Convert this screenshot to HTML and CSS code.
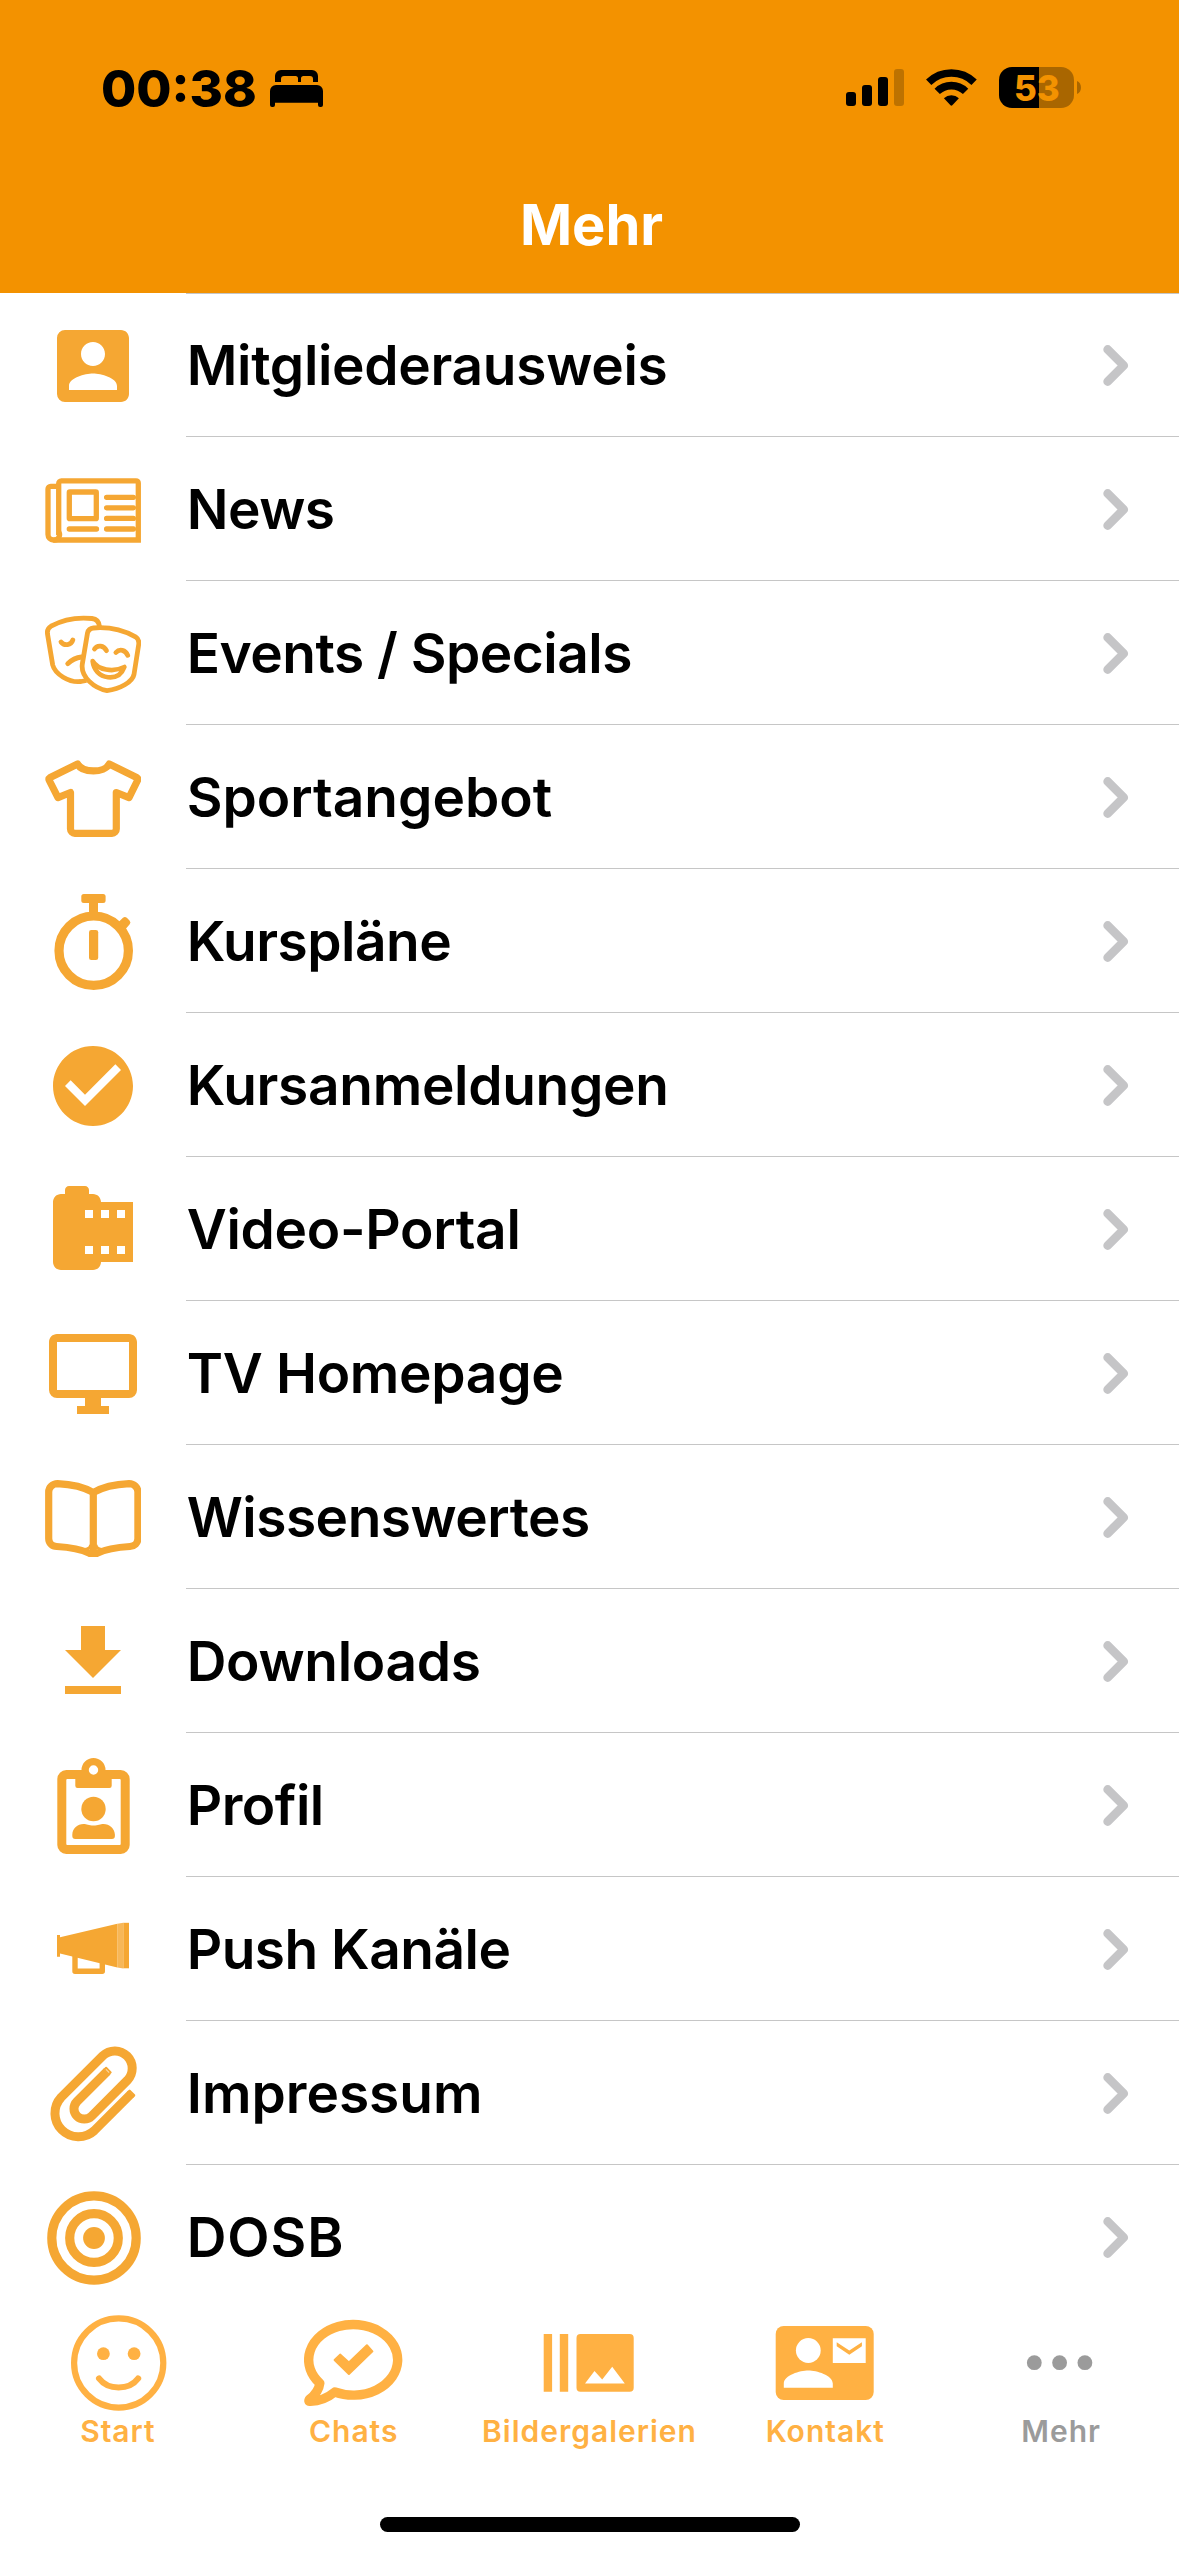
FILE: index.html
```html
<!DOCTYPE html>
<html lang="de">
<head>
<meta charset="utf-8">
<title>Mehr</title>
<link rel="stylesheet" href="styles.css">
</head>
<body>
<div class="screen">
  <header class="header">
    <div class="status">
      <span class="time">00:38</span>
      <svg class="bed" viewBox="270 69 54 39">
        <path d="M275 82V76a6 6 0 0 1 6-6h31a6 6 0 0 1 6 6v6h-5v-3a3 3 0 0 0-3-3h-6.500a2.500 2.500 0 0 0-2.500 2.500V82h-3v-3.500a2.500 2.500 0 0 0-2.500-2.500H284a3 3 0 0 0-3 3v3z"/>
        <path d="M270 105V91a6 6 0 0 1 6-6h41a6 6 0 0 1 6 6v14a2 2 0 0 1-2 2h-1a2 2 0 0 1-2-2v-2.300H275v2.300a2 2 0 0 1-2 2h-1a2 2 0 0 1-2-2z"/>
      </svg>
      <div class="indicators">
        <svg class="signal" viewBox="846 67 58 43">
          <rect x="846" y="92" width="10" height="14" rx="3"/>
          <rect x="862" y="85" width="10" height="21" rx="3"/>
          <rect x="878" y="77" width="10" height="29" rx="3"/>
          <rect x="894" y="69" width="10" height="37" rx="3" opacity=".22"/>
        </svg>
        <svg class="wifi" viewBox="925 67 53 43">
          <g fill="none" stroke="#000" stroke-width="7.600">
            <path d="M928.700 82.300A32.500 32.500 0 0 1 974.100 82.300"/>
            <path d="M937.200 91.400A20.300 20.300 0 0 1 965.600 91.400"/>
          </g>
          <path d="M943.900 98.300a11 11 0 0 1 15 0l-6.600 7a1.300 1.300 0 0 1-1.800 0z"/>
        </svg>
        <svg class="battery" viewBox="999 67 83 43">
          <path d="M1039 67h22a13 13 0 0 1 13 13v15a13 13 0 0 1-13 13h-22z" fill="#a96600"/>
          <path d="M1039 67h-27a13 13 0 0 0-13 13v15a13 13 0 0 0 13 13h27z"/>
          <path d="M1077 81c5.300 2 5.300 11 0 13z" fill="#a96600"/>
          <text class="level" x="1014" y="101">53</text>
        </svg>
      </div>
    </div>
    <h1 class="title">Mehr</h1>
  </header>

  <ul class="menu">
    <li class="item">
      <svg class="icon" viewBox="0 0 24 24"><path d="M3 5v14a2 2 0 0 0 2 2h14c1.100 0 2-.9 2-2V5c0-1.100-.9-2-2-2H5a2 2 0 0 0-2 2zm12 4c0 1.660-1.340 3-3 3s-3-1.340-3-3 1.340-3 3-3 3 1.340 3 3zm-9 8c0-2 4-3.100 6-3.100s6 1.100 6 3.100v1H6v-1z"/></svg>
      <div class="row"><span class="label">Mitgliederausweis</span><svg class="chevron" viewBox="0 0 26 43"><path d="M4.700 5.500 20.700 21.500 4.700 37.500"/></svg></div>
    </li>
    <li class="item">
      <svg class="icon line" viewBox="0 0 96 96" stroke-width="5.300">
        <path d="M13.700 73V21.500a2.700 2.700 0 0 1 2.700-2.700H91a2.300 2.300 0 0 1 2.300 2.300V78H8.400A5.400 5.400 0 0 1 3 72.600V27a2.700 2.700 0 0 1 2.700-2.700h8"/>
        <path d="M13.700 70a5.300 5.300 0 0 1-5.300 8"/>
        <rect x="24.300" y="30" width="27" height="26.700" rx=".5"/>
        <g stroke-linecap="round"><path d="M61.600 35.300h26.800M61.600 45.800h26.800M61.600 56.400h26.800M61.600 67h26.800M24.300 67h27.200"/></g>
      </svg>
      <div class="row"><span class="label tight">News</span><svg class="chevron" viewBox="0 0 26 43"><path d="M4.700 5.500 20.700 21.500 4.700 37.500"/></svg></div>
    </li>
    <li class="item">
      <svg class="icon line" viewBox="0 0 96 96" stroke-width="4.800" stroke-linejoin="round" stroke-linecap="round">
        <path stroke-linecap="butt" d="M54.500 20.500C54 16 51.500 13 47 12.500 32 11 18 13.500 6 20.200 3 22 2 24.500 2.500 28L7.700 59C10 68 24 77 36 75.500l5.500-1"/>
        <path d="M42.500 27c.8-3.200 2.600-4.700 6-5C63 20.800 78 24 90.500 30.800c2.800 1.700 3.700 4.200 3.200 7.700L89 68.500C87.500 76 75 83 62 84.600 49.500 82.500 35.500 71 37.300 58z"/>
        <path d="M16 36c3.200 4.300 10.200 3.300 11.800-2M22.700 57.700C26.500 54 31 51.600 36.500 51M49.500 43c3-4.400 9.200-3.600 12 1.700M70.900 46.500c3.600-4 9.600-2.600 11.800 2.800"/>
        <path d="M47.600 55c5.200 9 20.400 11.800 31.800 6C76.500 69 70.500 72 63 71.200 54.500 70.200 48.600 64 47.600 55z" stroke-width="4.600"/>
      </svg>
      <div class="row"><span class="label tight">Events / Specials</span><svg class="chevron" viewBox="0 0 26 43"><path d="M4.700 5.500 20.700 21.500 4.700 37.500"/></svg></div>
    </li>
    <li class="item">
      <svg class="icon line" viewBox="0 0 96 96" stroke-width="7.200" stroke-linejoin="round">
        <path d="M32.600 14 5.200 27.500Q3.400 28.700 4.300 30.500L13 47.600 25.500 42.500V79a4.300 4.300 0 0 0 4.300 4.300H67A4.300 4.300 0 0 0 71.300 79V42.500L84 47.600 92.500 30.500Q93.400 28.700 91.600 27.500L64.200 14C59.500 23.300 37.500 23.300 32.600 14z"/>
      </svg>
      <div class="row"><span class="label loose">Sportangebot</span><svg class="chevron" viewBox="0 0 26 43"><path d="M4.700 5.500 20.700 21.500 4.700 37.500"/></svg></div>
    </li>
    <li class="item">
      <svg class="icon" viewBox="0 0 96 96">
        <circle cx="48.700" cy="56.700" r="34.700" fill="none" stroke="#f5a733" stroke-width="9.200"/>
        <rect x="36.300" y="0" width="24.300" height="9" rx="2.500"/>
        <path d="M44 8h9v12h-9z"/>
        <rect x="44" y="36" width="9.200" height="30" rx="2.300"/>
        <path d="M72.500 29 78 23.700q2-1.600 3.800.1l2.700 2.700q1.800 2 .2 3.800L79.800 36z"/>
      </svg>
      <div class="row"><span class="label tight">Kurspläne</span><svg class="chevron" viewBox="0 0 26 43"><path d="M4.700 5.500 20.700 21.500 4.700 37.500"/></svg></div>
    </li>
    <li class="item">
      <svg class="icon" viewBox="0 0 24 24"><path d="M12 2C6.500 2 2 6.500 2 12s4.500 10 10 10 10-4.500 10-10S17.500 2 12 2m-2 15-5-5 1.410-1.410L10 14.170l7.590-7.590L19 8z"/></svg>
      <div class="row"><span class="label">Kursanmeldungen</span><svg class="chevron" viewBox="0 0 26 43"><path d="M4.700 5.500 20.700 21.500 4.700 37.500"/></svg></div>
    </li>
    <li class="item">
      <svg class="icon" viewBox="0 0 24 24"><path d="M14 5c0-1.100-.9-2-2-2h-1V2c0-.55-.45-1-1-1H6c-.55 0-1 .45-1 1v1H4c-1.100 0-2 .9-2 2v15c0 1.100.9 2 2 2h8c1.100 0 2-.9 2-2h8V5h-8zm-2 13h-2v-2h2v2zm0-9h-2V7h2v2zm4 9h-2v-2h2v2zm0-9h-2V7h2v2zm4 9h-2v-2h2v2zm0-9h-2V7h2v2z"/></svg>
      <div class="row"><span class="label">Video-Portal</span><svg class="chevron" viewBox="0 0 26 43"><path d="M4.700 5.500 20.700 21.500 4.700 37.500"/></svg></div>
    </li>
    <li class="item">
      <svg class="icon" viewBox="0 0 24 24"><path d="M21 16H3V4h18m0-2H3c-1.110 0-2 .89-2 2v12a2 2 0 0 0 2 2h7v2H8v2h8v-2h-2v-2h7a2 2 0 0 0 2-2V4c0-1.110-.9-2-2-2z"/></svg>
      <div class="row"><span class="label">TV Homepage</span><svg class="chevron" viewBox="0 0 26 43"><path d="M4.700 5.500 20.700 21.500 4.700 37.500"/></svg></div>
    </li>
    <li class="item">
      <svg class="icon line" viewBox="0 0 96 96" stroke-width="7.200">
        <path d="M48.300 22.500C38 16.500 26 14.200 12.500 13.600 7.500 13.600 3.700 17.500 3.700 22v46.500c0 4.500 3.500 7.800 8 8C24 77.200 36 79.200 44.500 83.300h7.600C60.600 79.200 72.600 77.200 84.900 76.500c4.500-.2 8-3.500 8-8V22c0-4.500-3.800-8.400-8.800-8.400C70.600 14.200 58.600 16.500 48.300 22.500z"/>
        <path d="M48.300 21v62"/>
        <path d="M40 79.500q6-1 5.500-5M56.600 79.500q-6-1-5.500-5" stroke-width="3"/>
      </svg>
      <div class="row"><span class="label tight">Wissenswertes</span><svg class="chevron" viewBox="0 0 26 43"><path d="M4.700 5.500 20.700 21.500 4.700 37.500"/></svg></div>
    </li>
    <li class="item">
      <svg class="icon" viewBox="0 0 24 24"><path d="M5 20h14v-2H5v2zM19 9h-4V3H9v6H5l7 7 7-7z"/></svg>
      <div class="row"><span class="label">Downloads</span><svg class="chevron" viewBox="0 0 26 43"><path d="M4.700 5.500 20.700 21.500 4.700 37.500"/></svg></div>
    </li>
    <li class="item">
      <svg class="icon" viewBox="0 0 96 96">
        <path fill-rule="evenodd" d="M36.500 12a12 12 0 0 1 24 0h15.200a9 9 0 0 1 9 9v66a9 9 0 0 1-9 9H21.300a9 9 0 0 1-9-9V21a9 9 0 0 1 9-9zM48.500 7.300a4.700 4.700 0 1 0 0 9.400 4.700 4.700 0 0 0 0-9.400zM22.300 21a1 1 0 0 0-1 1v64a1 1 0 0 0 1 1h52.400a1 1 0 0 0 1-1V22a1 1 0 0 0-1-1h-8v6.800a2.200 2.200 0 0 1-2.200 2.200h-32a2.200 2.200 0 0 1-2.200-2.200V21z"/>
        <circle cx="48.500" cy="51" r="12.200"/>
        <path d="M30.300 81a3 3 0 0 1-3-3v-1.500C27.500 70.500 32.500 66 38.500 66c3.500 0 5 1.500 10 1.500s6.500-1.500 10-1.500c6 0 11 4.500 11.400 10.500V78a3 3 0 0 1-3 3z"/>
      </svg>
      <div class="row"><span class="label tight">Profil</span><svg class="chevron" viewBox="0 0 26 43"><path d="M4.700 5.500 20.700 21.500 4.700 37.500"/></svg></div>
    </li>
    <li class="item">
      <svg class="icon" viewBox="0 0 96 96">
        <path d="M12 33h3v2.200L72.300 21.800v43.600L15 51.500v3.200h-3z"/>
        <path d="M72.300 21.800 78.300 20.800v45.700l-6-1.100z" opacity=".82"/>
        <path d="M78.300 20.800h5.700v45.500h-5.700z"/>
        <path d="M30 53v16.300h27.300V58" fill="none" stroke="#f5a733" stroke-width="5.400" stroke-linejoin="round"/>
      </svg>
      <div class="row"><span class="label tight">Push Kanäle</span><svg class="chevron" viewBox="0 0 26 43"><path d="M4.700 5.500 20.700 21.500 4.700 37.500"/></svg></div>
    </li>
    <li class="item">
      <svg class="icon line" viewBox="0 0 96 96" stroke-width="9">
        <path d="M86.500 47.400 49.300 84.600A23.500 23.500 0 0 1 16.100 51.400L57.800 9.700A17.400 17.400 0 0 1 82.400 34.300L46.600 70.100A10.300 10.300 0 0 1 32 55.500L62.300 25.200"/>
        <path d="M59.600 23.300 61.700 21.200 66.300 25.800 64.200 27.900zM83.700 45.600 85.300 44 89.900 48.600 88.300 50.200z" stroke-width="2" stroke-linejoin="round" transform="translate(-.6 .6)"/>
      </svg>
      <div class="row"><span class="label loose">Impressum</span><svg class="chevron" viewBox="0 0 26 43"><path d="M4.700 5.500 20.700 21.500 4.700 37.500"/></svg></div>
    </li>
    <li class="item">
      <svg class="icon" viewBox="0 0 96 96">
        <g fill="none" stroke="#f5a733" stroke-width="9.200"><circle cx="49" cy="48" r="42.200"/><circle cx="49" cy="48" r="24.300"/></g>
        <circle cx="49" cy="48" r="10.900"/>
      </svg>
      <div class="row"><span class="label wide">DOSB</span><svg class="chevron" viewBox="0 0 26 43"><path d="M4.700 5.500 20.700 21.500 4.700 37.500"/></svg></div>
    </li>
  </ul>

  <nav class="tabs">
    <div class="tab">
      <svg class="tab-icon" viewBox="67.900 2313 100 100">
        <g fill="none" stroke="#ffb143" stroke-width="6.200"><circle cx="118.600" cy="2363" r="44.600"/><path stroke-linecap="round" d="M99 2378.500c9 12 30 12 39 0"/></g>
        <circle cx="103.300" cy="2353.700" r="6.400"/><circle cx="134" cy="2353.700" r="6.400"/>
      </svg>
      <span class="tab-label">Start</span>
    </div>
    <div class="tab">
      <svg class="tab-icon" viewBox="303.700 2313 100 100">
        <path fill="none" stroke="#ffb143" stroke-width="9.400" stroke-linejoin="round" d="M334.500 2392A44.500 35.300 0 1 0 319.500 2383.200Q318.500 2392 309 2399.500 308 2401.300 309.500 2401.200 323 2401.500 334.500 2392z"/>
        <path stroke="#ffb143" stroke-width="2" stroke-linejoin="round" d="M334.300 2360 339.800 2354.600 348.600 2362.500 366.600 2345.200 372.100 2351.300 348.600 2374z"/>
      </svg>
      <span class="tab-label">Chats</span>
    </div>
    <div class="tab">
      <svg class="tab-icon" viewBox="539.500 2313 100 100">
        <path fill-rule="evenodd" d="M544.200 2334h8.400v57.700h-8.400zM560.300 2334h8.400v57.700h-8.400zM581 2334h49.200a4 4 0 0 1 4 4v49.700a4 4 0 0 1-4 4H581a4 4 0 0 1-4-4V2338a4 4 0 0 1 4-4zM585.500 2383.500h39.800l-12.600-16.800-10 12.800-7.700-8.500z"/>
      </svg>
      <span class="tab-label">Bildergalerien</span>
    </div>
    <div class="tab">
      <svg class="tab-icon" viewBox="775.300 2313 100 100">
        <rect x="776" y="2326" width="98" height="74" rx="8"/>
        <g fill="#fff"><circle cx="808.600" cy="2350.500" r="12.400"/><path d="M784.100 2387.700V2383.500c0-8.300 16.300-13 24.500-13s24.500 4.700 24.500 13v4.200zM833.100 2338.300H866V2363h-32.900z"/></g>
        <path d="M837 2342.300 849.600 2350.600 862.200 2342.300V2346.200L849.600 2354.700 837 2346.200z"/>
      </svg>
      <span class="tab-label">Kontakt</span>
    </div>
    <div class="tab active">
      <svg class="tab-icon" viewBox="1011.100 2313 100 100">
        <circle cx="1034.400" cy="2362.700" r="7.400"/><circle cx="1059.700" cy="2362.700" r="7.400"/><circle cx="1085" cy="2362.700" r="7.400"/>
      </svg>
      <span class="tab-label">Mehr</span>
    </div>
  </nav>
  <div class="home-indicator"></div>
</div>
</body>
</html>
```
FILE: styles.css
```css
* {
  box-sizing: border-box;
}

body {
  margin: 0;
  background: #fff;
  font-family: Inter, "Liberation Sans", sans-serif;
}

svg {
  display: block;
  flex: none;
}

.screen {
  width: 1179px;
  height: 2556px;
  overflow: hidden;
  display: flex;
  flex-direction: column;
}

.header {
  height: 293px;
  background: #f39200;
}

.status {
  height: 177px;
  padding: 0 97px 0 101px;
  display: flex;
  align-items: center;
}

.time {
  width: 169px;
  font-size: 51px;
  font-weight: 800;
  line-height: 60px;
}

.bed {
  width: 54px;
  height: 39px;
}

.indicators {
  margin-left: auto;
  display: flex;
  gap: 21px;
}

.signal {
  width: 58px;
  height: 43px;
}

.wifi {
  width: 53px;
  height: 43px;
}

.battery {
  width: 83px;
  height: 43px;
}

.level {
  font-size: 35px;
  font-weight: 800;
  fill: #f39200;
}

.title {
  margin: 0;
  padding-left: 4px;
  color: #fff;
  font-size: 56px;
  font-weight: 750;
  line-height: 96px;
  letter-spacing: 0;
  text-align: center;
}

.menu {
  margin: 0;
  padding: 0;
  list-style: none;
}

.item {
  height: 144px;
  padding-left: 45px;
  display: flex;
  gap: 45px;
}

.item:first-child {
  height: 143px;
}

.icon {
  width: 96px;
  height: 96px;
  margin-top: 26px;
  fill: #f5a733;
}

.item:first-child .icon {
  margin-top: 25px;
}

.line {
  fill: none;
  stroke: #f5a733;
}

.row {
  flex: 1;
  padding-right: 50px;
  border-top: 1px solid #c6c6c6;
  display: flex;
  align-items: center;
  justify-content: space-between;
}

.label {
  padding-left: 0.7px;
  font-size: 55px;
  font-weight: 600;
  line-height: 72px;
  letter-spacing: -0.3px;
}

.tight {
  letter-spacing: -0.5px;
}

.loose {
  letter-spacing: 0;
}

.wide {
  letter-spacing: 0.9px;
}

.chevron {
  width: 26px;
  height: 43px;
  margin-top: 1px;
  fill: none;
  stroke: #c5c5c7;
  stroke-width: 8.8px;
  stroke-linecap: round;
  stroke-linejoin: round;
}

.tabs {
  padding-top: 5px;
  display: grid;
  grid-template-columns: repeat(5, 1fr);
  color: #ffb143;
}

.tab {
  display: flex;
  flex-direction: column;
  align-items: center;
  gap: 1px;
}

.active {
  color: #9b9b9b;
}

.tab-icon {
  width: 100px;
  height: 100px;
  fill: currentColor;
}

.tab-label {
  font-size: 30px;
  font-weight: 600;
  line-height: 35px;
  letter-spacing: 1px;
}

.home-indicator {
  width: 420px;
  height: 15px;
  margin: 68px auto 0;
  border-radius: 8px;
  background: #000;
}
```
